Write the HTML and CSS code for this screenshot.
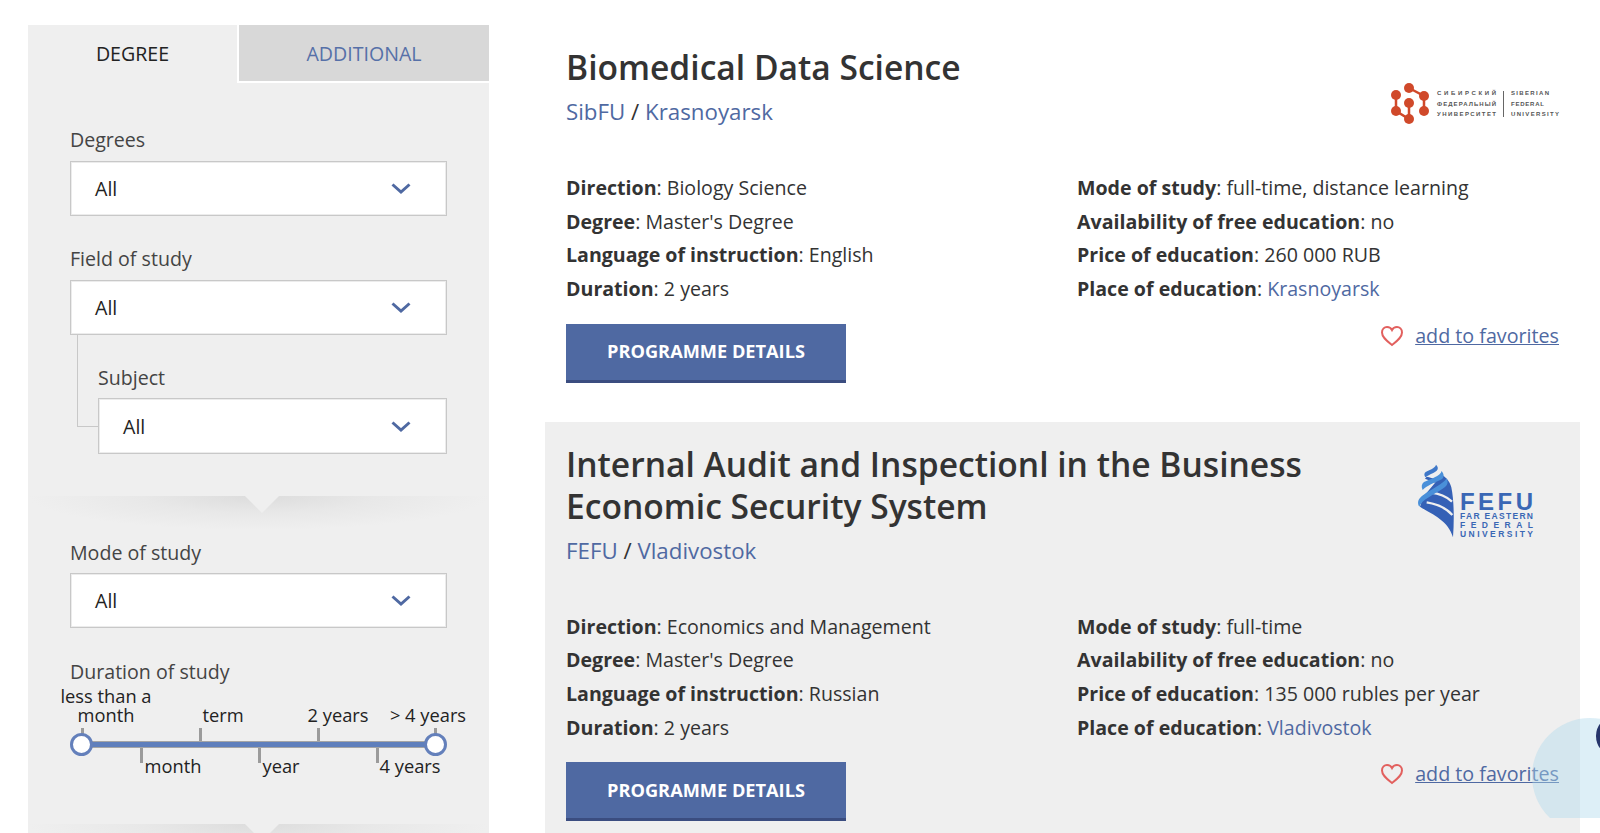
FILE: index.html
```html
<!DOCTYPE html>
<html lang="en">
<head>
<meta charset="utf-8">
<title>Programmes</title>
<link rel="stylesheet" href="styles.css">
</head>
<body>
<div class="page">
  <aside class="filters">
    <div class="tabs">
      <div class="tab tab-active">DEGREE</div>
      <div class="tab tab-other">ADDITIONAL</div>
    </div>
    <div class="group group-first">
      <div class="field">
        <div class="label">Degrees</div>
        <div class="select"><span>All</span><svg class="chev" viewBox="0 0 20 11"><path d="M1.500 1.500 10 9 18.500 1.500"/></svg></div>
      </div>
      <div class="field">
        <div class="label">Field of study</div>
        <div class="select"><span>All</span><svg class="chev" viewBox="0 0 20 11"><path d="M1.500 1.500 10 9 18.500 1.500"/></svg></div>
      </div>
      <div class="field field-sub">
        <div class="label label-sub">Subject</div>
        <div class="select select-sub"><span>All</span><svg class="chev" viewBox="0 0 20 11"><path d="M1.500 1.500 10 9 18.500 1.500"/></svg></div>
      </div>
    </div>
    <div class="divider"></div>
    <div class="group group-second">
      <div class="field">
        <div class="label">Mode of study</div>
        <div class="select"><span>All</span><svg class="chev" viewBox="0 0 20 11"><path d="M1.500 1.500 10 9 18.500 1.500"/></svg></div>
      </div>
      <div class="field field-duration">
        <div class="label">Duration of study</div>
        <div class="slider">
          <span class="mark up m0"></span><span class="mark up m2"></span><span class="mark up m4"></span><span class="mark up m6"></span>
          <span class="mark down m1"></span><span class="mark down m3"></span><span class="mark down m5"></span>
          <div class="track"></div>
          <span class="thumb t-left"></span><span class="thumb t-right"></span>
          <span class="tl above a0">less than a month</span>
          <span class="tl above a2">term</span>
          <span class="tl above a4">2 years</span>
          <span class="tl above a6">&gt; 4 years</span>
          <span class="tl below b1">month</span>
          <span class="tl below b3">year</span>
          <span class="tl below b5">4 years</span>
        </div>
      </div>
    </div>
    <div class="divider"></div>
  </aside>

  <main class="results">
    <article class="card">
      <header class="head">
        <div class="titles">
          <h2 class="title">Biomedical Data Science</h2>
          <div class="sub"><a href="#">SibFU</a> / <a href="#">Krasnoyarsk</a></div>
        </div>
        <svg class="logo logo-sibfu" viewBox="0 0 180 46" aria-label="Siberian Federal University">
          <g class="sib-lines">
            <path d="M30 6 45 14V29M30 21V37L17 29V13"/>
          </g>
          <g class="sib-dots">
            <circle cx="30" cy="6" r="5"/><circle cx="45" cy="14" r="5"/><circle cx="45" cy="29" r="5"/>
            <circle cx="30" cy="37" r="5"/><circle cx="17" cy="29" r="5"/><circle cx="17" cy="13" r="5"/><circle cx="30" cy="21" r="5"/>
          </g>
          <g class="sib-text">
            <text x="58" y="13" textLength="59">СИБИРСКИЙ</text>
            <text x="58" y="24" textLength="59">ФЕДЕРАЛЬНЫЙ</text>
            <text x="58" y="34" textLength="59">УНИВЕРСИТЕТ</text>
            <text x="132" y="13" textLength="38">SIBERIAN</text>
            <text x="132" y="24" textLength="33">FEDERAL</text>
            <text x="132" y="34" textLength="48">UNIVERSITY</text>
          </g>
          <path class="sib-rule" d="M124.500 9V35"/>
        </svg>
      </header>
      <div class="facts">
        <div class="col">
          <p><b>Direction</b>: Biology Science</p>
          <p><b>Degree</b>: Master's Degree</p>
          <p><b>Language of instruction</b>: English</p>
          <p><b>Duration</b>: 2 years</p>
        </div>
        <div class="col">
          <p><b>Mode of study</b>: full-time, distance learning</p>
          <p><b>Availability of free education</b>: no</p>
          <p><b>Price of education</b>: 260 000 RUB</p>
          <p><b>Place of education</b>: <a href="#">Krasnoyarsk</a></p>
        </div>
      </div>
      <div class="actions">
        <a class="btn" href="#">PROGRAMME DETAILS</a>
        <a class="fav" href="#"><svg class="heart" viewBox="0 0 24 22"><path d="M12 20C7 16 2 12.500 2 7.500 2 4 4.500 2 7 2 9 2 11 3 12 5 13 3 15 2 17 2 19.500 2 22 4 22 7.500 22 12.500 17 16 12 20Z"/></svg><span>add to favorites</span></a>
      </div>
    </article>

    <article class="card card-alt">
      <header class="head">
        <div class="titles">
          <h2 class="title">Internal Audit and Inspectionl in the Business Economic Security System</h2>
          <div class="sub"><a href="#">FEFU</a> / <a href="#">Vladivostok</a></div>
        </div>
        <svg class="logo logo-fefu" viewBox="0 0 130 80" aria-label="FEFU">
          <g transform="translate(-4 -3) scale(.3333)">
            <path class="fefu-dark" d="M30 140C60 160 115 180 129 232 133 180 132 120 124 82 118 60 105 50 95 45L40 110Z"/>
            <path class="fefu-gap" d="M50 127C80 132 110 145 127 165M62 98C85 100 110 110 126 125"/>
            <path class="fefu-dark" d="M50 50C70 55 85 58 88 62L75 68C65 62 55 60 45 56Z"/>
            <path class="fefu-light" d="M110 55C100 72 60 90 40 105 25 115 20 128 28 140 35 120 70 105 100 85 112 78 116 68 110 55Z"/>
            <path class="fefu-light" d="M95 33C92 48 60 58 42 66 35 72 33 80 38 90 48 78 75 68 95 58 104 52 102 42 95 33Z"/>
            <path class="fefu-mid" d="M78 14C76 24 58 30 47 36 42 40 42 46 46 52 52 46 70 40 80 32 86 26 84 20 78 14Z"/>
          </g>
          <g class="fefu-text">
            <text class="f-big" x="46" y="47" textLength="73">FEFU</text>
            <text class="f-sm" x="46" y="56" textLength="73">FAR EASTERN</text>
            <text class="f-sm" x="46" y="65" textLength="73">FEDERAL</text>
            <text class="f-sm" x="46" y="74" textLength="73">UNIVERSITY</text>
          </g>
        </svg>
      </header>
      <div class="facts">
        <div class="col">
          <p><b>Direction</b>: Economics and Management</p>
          <p><b>Degree</b>: Master's Degree</p>
          <p><b>Language of instruction</b>: Russian</p>
          <p><b>Duration</b>: 2 years</p>
        </div>
        <div class="col">
          <p><b>Mode of study</b>: full-time</p>
          <p><b>Availability of free education</b>: no</p>
          <p><b>Price of education</b>: 135 000 rubles per year</p>
          <p><b>Place of education</b>: <a href="#">Vladivostok</a></p>
        </div>
      </div>
      <div class="actions">
        <a class="btn" href="#">PROGRAMME DETAILS</a>
        <a class="fav" href="#"><svg class="heart" viewBox="0 0 24 22"><path d="M12 20C7 16 2 12.500 2 7.500 2 4 4.500 2 7 2 9 2 11 3 12 5 13 3 15 2 17 2 19.500 2 22 4 22 7.500 22 12.500 17 16 12 20Z"/></svg><span>add to favorites</span></a>
      </div>
    </article>
  </main>
</div>
<div class="chat"><span class="chat-dark"></span></div>
</body>
</html>
```
FILE: styles.css
```css
* { box-sizing: border-box; }
html, body { margin: 0; height: 833px; overflow: hidden; background: #fff; }
body { font-family: "Open Sans", "Noto Sans", sans-serif; color: #333; font-size: 20px; }
a { color: #4f69a2; text-decoration: none; }

.page { display: flex; align-items: flex-start; padding: 25px 0 0 28px; }

/* Sidebar */
.filters { width: 461px; flex: none; background: #efefef; min-height: 830px; }
.tabs { display: flex; height: 58px; font-size: 19.600px; }
.tab { display: flex; align-items: center; justify-content: center; height: 58px; }
.tab-active { width: 209px; color: #222; padding-bottom: 2px; }
.tab-other { flex: 1; background: #d8d8d8; color: #5670a8; border-left: 2px solid #fff; border-bottom: 2px solid #fff; }

.group { padding: 0 42px; }
.group-first { padding-top: 43px; height: 413px; }
.group-second { padding-top: 9px; height: 294px; }
.field { margin-bottom: 30px; }
.label { font-size: 19.600px; line-height: 27px; color: #444; margin-bottom: 7px; }
.group-first .field { margin-bottom: 29px; }
.group-first .label { margin-bottom: 8px; }
.group-first .label-sub { margin-bottom: 7px; }
.select { display: flex; align-items: center; justify-content: space-between; height: 55px; background: #fff; border: 1px solid #c8c8c8; box-shadow: inset 0 0 0 1px rgba(200, 200, 200, .35); padding: 0 35px 0 24px; font-size: 19.600px; color: #222; }
.chev { width: 20px; height: 11px; fill: none; stroke: #4f69a2; stroke-width: 3; }

.field-sub { margin: 0 0 0 28px; position: relative; }
.field-sub::before { content: ""; position: absolute; left: -21px; top: -29px; width: 21px; height: 91px; border-left: 1px solid #c8c8c8; border-bottom: 1px solid #c8c8c8; }
.select-sub { height: 56px; }

.divider { position: relative; height: 34px; background: radial-gradient(ellipse 50% 100% at 50% 0, #dcdcdc 0, #e8e8e8 50%, #efefef 100%); }
.divider::after { content: ""; position: absolute; left: 217px; top: 0; border-left: 17px solid transparent; border-right: 17px solid transparent; border-top: 17px solid #efefef; }

/* Slider */
.field-duration { margin-top: 30px; margin-bottom: 0; }
.slider { position: relative; height: 96px; margin-top: -6px; font-size: 18.300px; color: #222; }
.track { position: absolute; left: 12px; top: 55px; width: 353px; height: 7px; background: #5f7fbc; border-top: 1px solid #a5a5a5; border-bottom: 1px solid #a5a5a5; }
.mark { position: absolute; width: 3px; height: 15px; background: #9b9b9b; margin-left: -1px; }
.up { top: 42px; }
.down { top: 62px; }
.m0 { left: 12px; } .m1 { left: 71px; } .m2 { left: 130px; } .m3 { left: 189px; }
.m4 { left: 248px; } .m5 { left: 307px; } .m6 { left: 365px; }
.thumb { position: absolute; top: 47px; width: 23px; height: 23px; border-radius: 50%; background: #fff; border: 3px solid #6480bb; margin-left: -12px; }
.t-left { left: 12px; } .t-right { left: 366px; }
.tl { position: absolute; transform: translateX(-50%); text-align: center; line-height: 18.500px; white-space: nowrap; }
.above { bottom: 58px; }
.below { top: 71px; }
.a0 { left: 36px; width: 100px; white-space: normal; }
.a2 { left: 153px; } .a4 { left: 268px; } .a6 { left: 358px; }
.b1 { left: 103px; } .b3 { left: 211px; } .b5 { left: 340px; }

/* Results */
.results { width: 1035px; margin-left: 56px; flex: none; }
.card { padding: 21px 21px 39px; }
.card-alt { background: #efefef; }
.head { display: flex; justify-content: space-between; align-items: flex-start; }
.titles { width: 770px; }
.title { margin: 0; font-size: 33.600px; line-height: 42px; font-weight: 600; color: #333; }
.sub { margin-top: 7px; font-size: 22.300px; line-height: 34px; color: #333; }
.logo { display: block; flex: none; overflow: visible; }
.logo-sibfu { width: 180px; height: 46px; margin-top: 36px; }
.logo-fefu { width: 130px; height: 80px; margin-top: 20px; margin-right: 15px; }
.sib-lines path { fill: none; stroke: #d0492a; stroke-width: 2.500; }
.sib-dots { fill: #d0492a; }
.sib-text { font-family: "Liberation Sans", sans-serif; font-size: 6px; font-weight: 700; fill: #555; }
.sib-rule { stroke: #666; stroke-width: 1; }
.fefu-light { fill: #4a90d9; }
.fefu-mid { fill: #3f78c8; }
.fefu-dark { fill: #3561b6; }
.fefu-gap { fill: none; stroke: #efefef; stroke-width: 7; }
.fefu-text { font-family: "Liberation Sans", sans-serif; font-weight: 700; fill: #3a67b5; }
.f-big { font-size: 24px; }
.f-sm { font-size: 8.500px; }

.facts { display: flex; margin-top: 42px; }
.col { width: 511px; flex: none; }
.col:last-child { width: 482px; }
.col p { margin: 0; line-height: 33.670px; font-size: 19.600px; color: #333; }
.col b { font-weight: 700; }
.actions { display: flex; justify-content: space-between; align-items: flex-start; margin-top: 18px; }
.btn { display: flex; align-items: center; justify-content: center; width: 280px; height: 59px; background: #4f69a2; border-bottom: 3px solid #3b4d80; color: #fff; font-weight: 700; font-size: 18.200px; padding-bottom: 1px; }
.fav { display: flex; align-items: center; gap: 11px; margin-top: -3px; font-size: 19.700px; line-height: 30px; }
.fav span { text-decoration: underline; }
.heart { width: 24px; height: 22px; fill: none; stroke: #e2605e; stroke-width: 2; }

/* Chat bubble */
.chat { position: fixed; left: 1532px; top: 718px; width: 68px; height: 100px; overflow: hidden; }
.chat::before { content: ""; position: absolute; left: 0; top: 0; width: 116px; height: 116px; border-radius: 50%; background: rgba(173, 216, 235, .42); }
.chat-dark { position: absolute; left: 64px; top: 0; width: 30px; height: 36px; border-radius: 50%; background: #26356b; }
```
